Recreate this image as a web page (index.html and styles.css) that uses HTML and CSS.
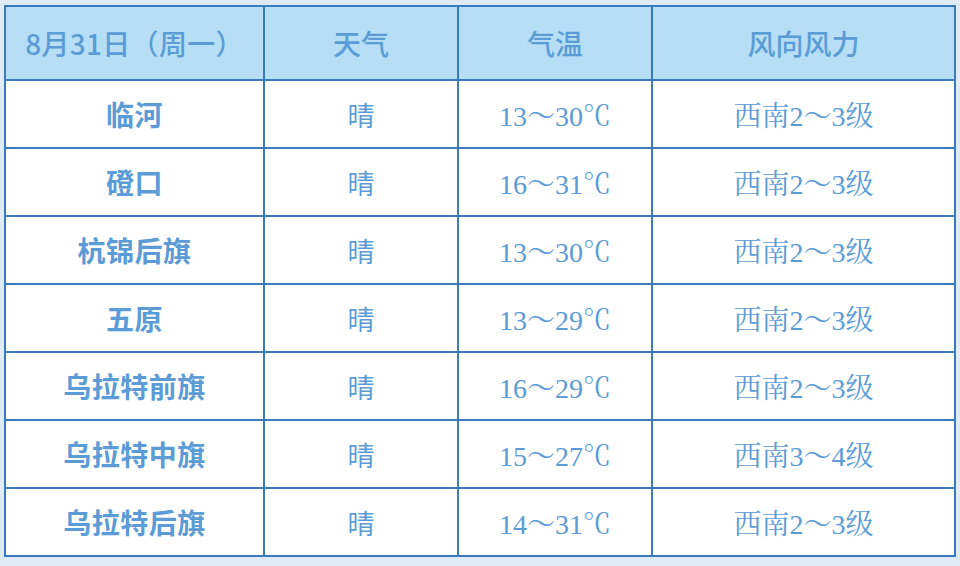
FILE: index.html
```html
<!DOCTYPE html>
<html lang="zh">
<head>
<meta charset="utf-8">
<link rel="stylesheet" href="styles.css">
</head>
<body>
<table class="wx">
  <colgroup>
    <col class="c1"><col class="c2"><col class="c3"><col class="c4">
  </colgroup>
  <thead>
    <tr><th class="date">8月31日（周一）</th><th>天气</th><th>气温</th><th>风向风力</th></tr>
  </thead>
  <tbody>
    <tr><td class="place">临河</td><td class="sky">晴</td><td class="num">13～30℃</td><td class="num">西南2～3级</td></tr>
    <tr><td class="place">磴口</td><td class="sky">晴</td><td class="num">16～31℃</td><td class="num">西南2～3级</td></tr>
    <tr><td class="place">杭锦后旗</td><td class="sky">晴</td><td class="num">13～30℃</td><td class="num">西南2～3级</td></tr>
    <tr><td class="place">五原</td><td class="sky">晴</td><td class="num">13～29℃</td><td class="num">西南2～3级</td></tr>
    <tr><td class="place">乌拉特前旗</td><td class="sky">晴</td><td class="num">16～29℃</td><td class="num">西南2～3级</td></tr>
    <tr><td class="place">乌拉特中旗</td><td class="sky">晴</td><td class="num">15～27℃</td><td class="num">西南3～4级</td></tr>
    <tr><td class="place">乌拉特后旗</td><td class="sky">晴</td><td class="num">14～31℃</td><td class="num">西南2～3级</td></tr>
  </tbody>
</table>
</body>
</html>
```
FILE: styles.css
```css
html, body {
  margin: 0;
  background: #deebf6;
}
body {
  padding: 5px 0 0 4px;
  font-family: "Noto Sans CJK SC", "Noto Sans", sans-serif;
  color: #5b9bd6;
}
.wx {
  border-collapse: collapse;
  width: 950px;
  table-layout: fixed;
  background: #ffffff;
  border: 2px solid #3a7bbf;
}
.c1 { width: 259px; }
.c2 { width: 194px; }
.c3 { width: 194px; }
.c4 { width: 303px; }
.wx th, .wx td {
  border: 2px solid #3a7bbf;
  text-align: center;
  padding: 0;
}
.wx th {
  background: #b6dff5;
  height: 72px;
  font-size: 28px;
  font-weight: 500;
}
.wx th.date {
  font-size: 28px;
  letter-spacing: 0.3px;
}
.wx td {
  height: 66px;
  font-size: 27px;
}
.wx td.place { font-size: 28px; font-weight: 700; letter-spacing: 0.5px; }
.wx td.num {
  font-family: "Liberation Serif", "Noto Serif CJK SC", "Noto Sans CJK SC", serif;
  font-size: 28px;
}
```
